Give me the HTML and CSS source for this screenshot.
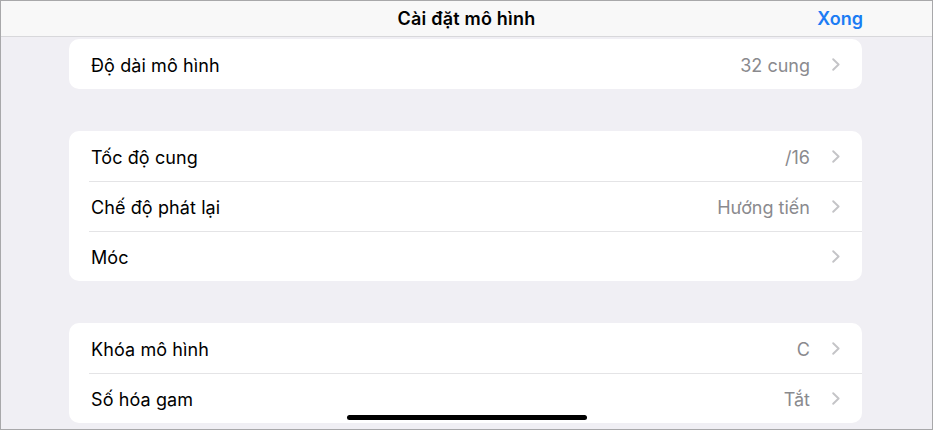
FILE: index.html
```html
<!DOCTYPE html>
<html lang="vi">
<head>
<meta charset="utf-8">
<title>Cài đặt mô hình</title>
<link rel="stylesheet" href="styles.css">
</head>
<body>
<div class="device">
  <header class="navbar">
    <div class="nav-title">Cài đặt mô hình</div>
    <div class="nav-done">Xong</div>
  </header>
  <main class="content">
    <section class="group first">
      <div class="row"><span class="label">Độ dài mô hình</span><span class="value">32 cung</span><svg class="chev" viewBox="0 0 8 13" width="8" height="13"><path d="M1.2 1.2 6.6 6.5 1.2 11.8"/></svg></div>
    </section>
    <section class="group">
      <div class="row"><span class="label">Tốc độ cung</span><span class="value">/16</span><svg class="chev" viewBox="0 0 8 13" width="8" height="13"><path d="M1.2 1.2 6.6 6.5 1.2 11.8"/></svg></div>
      <div class="row"><span class="label">Chế độ phát lại</span><span class="value">Hướng tiến</span><svg class="chev" viewBox="0 0 8 13" width="8" height="13"><path d="M1.2 1.2 6.6 6.5 1.2 11.8"/></svg></div>
      <div class="row"><span class="label">Móc</span><span class="value"></span><svg class="chev" viewBox="0 0 8 13" width="8" height="13"><path d="M1.2 1.2 6.6 6.5 1.2 11.8"/></svg></div>
    </section>
    <section class="group">
      <div class="row"><span class="label">Khóa mô hình</span><span class="value">C</span><svg class="chev" viewBox="0 0 8 13" width="8" height="13"><path d="M1.2 1.2 6.6 6.5 1.2 11.8"/></svg></div>
      <div class="row"><span class="label">Số hóa gam</span><span class="value">Tắt</span><svg class="chev" viewBox="0 0 8 13" width="8" height="13"><path d="M1.2 1.2 6.6 6.5 1.2 11.8"/></svg></div>
    </section>
  </main>
  <div class="home-indicator"></div>
</div>
</body>
</html>
```

FILE: styles.css
```css
* { box-sizing: border-box; }
html, body {
  margin: 0;
  padding: 0;
  background: #ffffff;
}
body {
  font-family: "Inter", "Noto Sans", "Liberation Sans", sans-serif;
  -webkit-font-smoothing: antialiased;
}
.device {
  position: relative;
  width: 933px;
  height: 430px;
  border: 1px solid #a8a8aa;
  background: #f0eff4;
  overflow: hidden;
}
.navbar {
  height: 36px;
  background: #f8f8f8;
  border-bottom: 1px solid #d8d8db;
  display: grid;
  grid-template-columns: 1fr auto 1fr;
  align-items: center;
  padding: 0 69px 0 69px;
}
.nav-title {
  grid-column: 2;
  font-size: 18px;
  font-weight: 600;
  letter-spacing: 0.2px;
  color: #000;
  padding-bottom: 1px;
}
.nav-done {
  grid-column: 3;
  justify-self: end;
  font-size: 18px;
  font-weight: 600;
  letter-spacing: 0;
  color: #1b7cf4;
  padding-bottom: 1px;
}
.content {
  padding: 2px 70px 0 68px;
  display: flex;
  flex-direction: column;
  gap: 42px;
}
.group {
  background: #ffffff;
  border-radius: 10px;
  overflow: hidden;
}
.row {
  height: 50px;
  display: flex;
  align-items: center;
  padding: 3px 22px 0 22px;
  position: relative;
}
.row + .row::before {
  content: "";
  position: absolute;
  left: 20px;
  right: 0;
  top: 0;
  height: 1px;
  background: #e4e4e6;
}
.label {
  flex: 1;
  font-size: 18px;
  letter-spacing: 0.1px;
  color: #000;
}
.value {
  font-size: 18px;
  letter-spacing: 0;
  color: #8a8a8e;
  margin-right: 22px;
}
.chev {
  fill: none;
  stroke: #c4c4c7;
  stroke-width: 1.9;
  stroke-linecap: round;
  stroke-linejoin: round;
  margin-top: -2px;
}
.home-indicator {
  position: absolute;
  left: 346px;
  top: 414px;
  width: 240px;
  height: 5px;
  border-radius: 3px;
  background: #000;
}
```
